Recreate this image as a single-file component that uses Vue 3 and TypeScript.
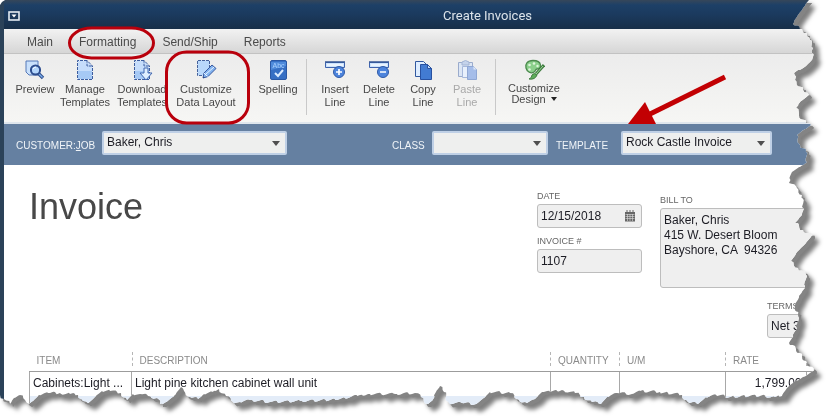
<script setup lang="ts">
import { ref } from 'vue'

type Point = [number, number]

interface Tool {
  icon: string
  lines: string[]
  size: string
  disabled?: boolean
  menu?: boolean
}

const tabs = ['Main', 'Formatting', 'Send/Ship', 'Reports']

const groups: Tool[][] = [
  [
    { icon: 'preview', lines: ['Preview'], size: 'medium' },
    { icon: 'manage', lines: ['Manage', 'Templates'], size: 'medium' },
    { icon: 'download', lines: ['Download', 'Templates'], size: 'wide' },
    { icon: 'layout', lines: ['Customize', 'Data Layout'], size: 'wide' },
    { icon: 'spelling', lines: ['Spelling'], size: 'last' }
  ],
  [
    { icon: 'insert', lines: ['Insert', 'Line'], size: 'narrow' },
    { icon: 'delete', lines: ['Delete', 'Line'], size: 'narrow' },
    { icon: 'copy', lines: ['Copy', 'Line'], size: 'narrow' },
    { icon: 'paste', lines: ['Paste', 'Line'], size: 'narrow', disabled: true }
  ],
  [{ icon: 'design', lines: ['Customize', 'Design'], size: 'wide', menu: true }]
]

const customer = ref('Baker, Chris')
const classification = ref('')
const template = ref('Rock Castle Invoice')
const date = ref('12/15/2018')
const invoiceNumber = ref('1107')
const billTo = ref('Baker, Chris\n415 W. Desert Bloom\nBayshore, CA  94326')
const terms = ref('Net 30')

// Outline of the torn paper: down the right side, then back along the bottom.
const rightEdge: Point[] = [
  [809, 0], [803, 8], [798, 15], [793, 24], [800, 29], [807, 33], [810, 40], [813, 48],
  [812, 60], [806, 66], [794, 73], [795, 80], [803, 90], [809, 95], [801, 101], [796, 108],
  [799, 115], [806, 123], [811, 125], [805, 129], [797, 135], [800, 145], [806, 152],
  [807, 162], [800, 167], [792, 172], [789, 183], [797, 188], [802, 195], [803, 208],
  [802, 215], [795, 223], [803, 230], [812, 235], [806, 243], [797, 252], [791, 261],
  [798, 268], [806, 275], [805, 288], [799, 296], [795, 305], [798, 315], [797, 328],
  [789, 343], [800, 353], [807, 363], [814, 371], [803, 377], [793, 383], [787, 388],
  [782, 396]
]
const bottomEdge: Point[] = [
  [775, 397], [760, 396], [745, 396], [730, 397], [716, 395], [706, 397], [698, 404],
  [688, 402], [682, 395], [668, 393], [660, 392], [640, 391], [632, 394], [617, 393],
  [607, 397], [601, 404], [592, 402], [584, 397], [575, 393], [562, 390], [550, 392],
  [542, 392], [535, 399], [527, 403], [517, 399], [510, 393], [490, 392], [484, 398],
  [476, 404], [462, 403], [449, 403], [444, 392], [440, 386], [436, 392], [432, 401],
  [428, 404], [421, 397], [415, 393], [395, 394], [370, 394], [360, 395], [345, 398],
  [330, 400], [300, 401], [270, 402], [250, 400], [240, 402], [233, 402], [226, 396],
  [219, 389], [212, 392], [204, 394], [198, 399], [190, 397], [184, 391], [181, 387],
  [176, 394], [173, 397], [166, 402], [160, 404], [157, 398], [148, 396], [140, 394],
  [133, 394], [127, 400], [121, 393], [110, 391], [102, 391], [97, 395], [93, 399],
  [88, 403], [83, 401], [78, 395], [70, 394], [60, 393], [48, 393], [39, 395], [33, 401],
  [29, 404], [25, 400], [20, 395], [14, 398], [10, 404], [4, 399], [0, 395]
]

function tear(points: Point[]): Point[] {
  const out: Point[] = []
  points.forEach((p, i) => {
    out.push(p)
    const next = points[i + 1]
    if (!next) return
    const steps = Math.floor(Math.hypot(next[0] - p[0], next[1] - p[1]) / 2)
    for (let s = 1; s < steps; s++) {
      const t = s / steps
      const wobble = Math.sin((i * 7 + s * 5) * 2.3) * 1.3
      out.push([p[0] + (next[0] - p[0]) * t + wobble, p[1] + (next[1] - p[1]) * t - wobble])
    }
  })
  return out
}

const corner: Point[] = [[0, 5], [2, 2], [5, 0]]
const outline = [...corner, ...tear([...rightEdge, ...bottomEdge])]
const tornClip =
  'polygon(' +
  outline
    .map(([x, y]) => `${((x / 826) * 100).toFixed(2)}% ${((y / 416) * 100).toFixed(2)}%`)
    .join(', ') +
  ')'
</script>

<template>
  <div class="page">
    <div class="shadow">
      <div class="sheet" :style="{ clipPath: tornClip }">
        <header class="titlebar">
          <button class="window-menu" type="button" aria-label="Window menu">
            <svg width="12" height="10" viewBox="0 0 12 10">
              <rect x="1" y="1" width="10" height="8" fill="none" stroke="#e4ebf2" stroke-width="1.6" />
              <path d="M3.5 3.5h5L6 6.5z" fill="#fff" />
            </svg>
          </button>
          <h1>Create Invoices</h1>
        </header>

        <nav class="tabs">
          <a v-for="tab in tabs" :key="tab" href="#">{{ tab }}</a>
        </nav>

        <div class="toolbar">
          <div v-for="(group, g) in groups" :key="g" class="group">
            <button
              v-for="tool in group"
              :key="tool.icon"
              type="button"
              class="tool"
              :class="[tool.size, { compact: tool.menu }]"
              :disabled="tool.disabled"
            >
              <svg class="icon" width="22" height="22" viewBox="0 0 22 22" aria-hidden="true">
                <g v-if="tool.icon === 'preview'">
                  <path d="M2 2h12v14H5l-3-3z" fill="#c9e0fb" stroke="#5578b8" />
                  <path d="M14 14l5 5" stroke="#2f4f8c" stroke-width="3.4" />
                  <path d="M14.5 14.5l4 4" stroke="#7fb0ee" stroke-width="1.2" />
                  <circle cx="11.5" cy="11" r="4.6" fill="#b4d6fb" stroke="#2d4d8e" stroke-width="2" />
                  <path d="M9 10q1-2 3-2" fill="none" stroke="#fff" />
                </g>
                <g v-else-if="tool.icon === 'manage' || tool.icon === 'download'">
                  <path d="M4 2h9l5 5v13H4z" fill="#c6ddfb" />
                  <path d="M4 12h14v8H4z" fill="#a6c9f5" />
                  <path d="M13 1.5H3.5v19h15V7L13 1.5V7h5" fill="none" stroke="#3c5d9f" stroke-dasharray="3 1" />
                  <path v-if="tool.icon === 'download'" d="M13 9h4v5h4l-6 7-6-7h4z" fill="#e0efff" stroke="#4268b0" />
                </g>
                <g v-else-if="tool.icon === 'layout'">
                  <path d="M2.5 1.5h12v15l-3 2-2-2h-7z" fill="#b9d8fb" />
                  <path d="M14.5 9V1.5h-12v15h6" fill="none" stroke="#46629b" stroke-dasharray="3 1" />
                  <path d="M8 19l1-5 8-8 4 3.5-8 8z" fill="#83b4f0" stroke="#38599f" />
                  <path d="M9 14l3.5 3.5M11 15l8-7" stroke="#eaf4ff" />
                  <path d="M8 19l1.5-.5-1-1z" fill="#263f77" />
                </g>
                <g v-else-if="tool.icon === 'spelling'">
                  <rect x="3.5" y="1.5" width="16" height="19" rx="1.5" fill="#366fc4" stroke="#2a58a5" />
                  <path d="M4 11V3h15v4z" fill="#4f8bdb" />
                  <text x="11.5" y="8.5" text-anchor="middle" font-size="7" fill="#a9d1ff">Abc</text>
                  <path d="M8 14l3 3 5-6" fill="none" stroke="#dcecff" stroke-width="2" />
                </g>
                <g v-else-if="tool.icon === 'insert' || tool.icon === 'delete'">
                  <path d="M1.5 3.5h19v5h-19z" fill="#cbe2fc" stroke="#3e63ae" />
                  <path d="M1 3h20" stroke="#355694" stroke-width="1.5" />
                  <path d="M3 6h16" stroke="#f5faff" stroke-width="1.5" />
                  <circle cx="15" cy="13" r="5.5" fill="#4d84dc" stroke="#2f5aa8" />
                  <path d="M12 13h6" stroke="#fff" stroke-width="1.7" />
                  <path v-if="tool.icon === 'insert'" d="M15 10v6" stroke="#fff" stroke-width="1.7" />
                </g>
                <g v-else-if="tool.icon === 'copy'">
                  <path d="M3.5 2.5h8l3 3v12h-11z" fill="#deedff" stroke="#31589f" />
                  <path d="M8.5 5.5h7l4 4v11h-11z" fill="#427bd2" stroke="#2851a0" />
                  <path d="M15.5 5.5v4h4z" fill="#bfdafb" stroke="#2851a0" />
                </g>
                <g v-else-if="tool.icon === 'paste'">
                  <path d="M2.5 3.5h14v14h-14z" fill="#dce6f5" stroke="#9aabcc" />
                  <path d="M6 3q3.5-3 7 0v3H6z" fill="#c5d3eb" stroke="#a3b4d4" />
                  <path d="M6.5 7.5h7v11h-7z" fill="#e8f0fc" stroke="#a6b8db" />
                  <path d="M11.5 7.5h6l3 3v10h-9z" fill="#a5bde9" stroke="#8fa7d4" />
                  <path d="M17.5 7.5v3h3z" fill="#dfe9f8" />
                </g>
                <g v-else>
                  <path d="M10 1.5c-6 0-8 4-7 7.5 1 4 5 6 8 4 2-1 1-3 3-3s4-1 3.5-4c-.5-3-4-4.5-7.5-4.5z" fill="#8bcf8b" stroke="#4c8a4e" stroke-width="1.3" />
                  <circle cx="6.5" cy="6" r="1.3" fill="#dff5dc" />
                  <circle cx="11" cy="4.5" r="1.3" fill="#dff5dc" />
                  <circle cx="6.5" cy="10.5" r="1.3" fill="#dff5dc" />
                  <circle cx="14.5" cy="7" r="1.2" fill="#dff5dc" />
                  <path d="M6 20q3-1 3-4 2-3 5 0-2 5-8 4z" fill="#5fae5b" stroke="#3f7d40" />
                  <path d="M13 15l8-9" stroke="#3f7d40" stroke-width="3" />
                  <path d="M13 15l7-8" stroke="#9fd79a" />
                </g>
              </svg>
              <span v-for="line in tool.lines" :key="line" class="line">
                {{ line }}<i v-if="tool.menu && line === 'Design'" class="caret"></i>
              </span>
            </button>
          </div>
        </div>

        <div class="jobbar">
          <div class="picker customer">
            <label for="customer">CUSTOMER:<u>J</u>OB</label>
            <span class="select">
              <select id="customer" v-model="customer">
                <option>Baker, Chris</option>
              </select>
            </span>
          </div>
          <div class="picker class">
            <label for="class">CLASS</label>
            <span class="select">
              <select id="class" v-model="classification">
                <option value=""></option>
              </select>
            </span>
          </div>
          <div class="picker template">
            <label for="template">TEMPLATE</label>
            <span class="select">
              <select id="template" v-model="template">
                <option>Rock Castle Invoice</option>
              </select>
            </span>
          </div>
        </div>

        <section class="form">
          <h2>Invoice</h2>
          <div class="numbers">
            <label for="date">DATE</label>
            <div class="box">
              <input id="date" v-model="date" type="text" />
              <svg width="12" height="12" viewBox="0 0 12 12" aria-hidden="true">
                <path d="M1 2h10v9.5H1z" fill="#666" />
                <path d="M3 0v3M6 0v3M9 0v3" stroke="#666" />
                <path d="M1.5 4.5h9M1.5 6.5h9M1.5 8.5h9M3.5 4v7M6 4v7M8.5 4v7" stroke="#ddd" stroke-width=".6" />
              </svg>
            </div>
            <label for="number">INVOICE #</label>
            <div class="box">
              <input id="number" v-model="invoiceNumber" type="text" />
            </div>
          </div>
          <div class="billing">
            <label for="billto">BILL TO</label>
            <textarea id="billto" v-model="billTo"></textarea>
            <div class="terms">
              <label for="terms">TERMS</label>
              <div class="box">
                <input id="terms" v-model="terms" type="text" />
              </div>
            </div>
          </div>
        </section>

        <table class="items">
          <colgroup>
            <col class="c-item" />
            <col />
            <col class="c-qty" />
            <col class="c-um" />
            <col class="c-rate" />
            <col class="c-end" />
          </colgroup>
          <thead>
            <tr>
              <th><span>ITEM</span></th>
              <th><span>DESCRIPTION</span></th>
              <th><span>QUANTITY</span></th>
              <th><span>U/M</span></th>
              <th><span>RATE</span></th>
              <th><span></span></th>
            </tr>
          </thead>
          <tbody>
            <tr>
              <td>Cabinets:Light ...</td>
              <td>Light pine kitchen cabinet wall unit</td>
              <td></td>
              <td></td>
              <td class="amount">1,799.00</td>
              <td></td>
            </tr>
            <tr>
              <td></td>
              <td></td>
              <td></td>
              <td></td>
              <td></td>
              <td></td>
            </tr>
          </tbody>
        </table>
      </div>
    </div>

    <svg class="marks" width="826" height="416" viewBox="0 0 826 416" aria-hidden="true">
      <g fill="none" stroke="#b9000c" stroke-width="3">
        <rect x="69.500" y="28" width="84" height="30" rx="22" ry="15" />
        <rect x="166.500" y="52" width="82" height="71" rx="20" />
      </g>
      <path d="M725 77L648 115" stroke="#c20003" stroke-width="5" />
      <path d="M628 124L645 102L656 124z" fill="#c20003" />
    </svg>
  </div>
</template>

<style>
body {
  margin: 0;
  background: #fff;
}
</style>

<style scoped>
.page {
  position: relative;
  overflow: hidden;
  min-height: 100vh;
  font-family: "Liberation Sans", Arial, sans-serif;
  font-size: 12px;
  color: #1c1c24;
}
.page * {
  box-sizing: border-box;
}
.shadow {
  filter: drop-shadow(3px 3px 0 #848484) drop-shadow(4px 4px 2px rgba(0, 0, 0, 0.5));
}
.sheet {
  min-height: 100vh;
  overflow: hidden;
  background: #fff;
  border-left: 4px solid #2b4259;
}
button,
input,
select,
textarea {
  font: inherit;
  color: inherit;
  margin: 0;
}
.titlebar {
  display: flex;
  align-items: center;
  height: 29px;
  padding: 2px 0 0 4px;
  background: linear-gradient(#36475a 0, #1d4067 5px, #1b3a5e 50%, #182f48 100%);
}
.window-menu {
  display: flex;
  width: 12px;
  padding: 0;
  border: 0;
  background: none;
}
.titlebar h1 {
  margin: 0 0 0 423px;
  font: 13px/18px Roboto, "Liberation Sans", sans-serif;
  color: #dbe3ea;
}
.tabs {
  display: flex;
  gap: 26px;
  height: 25px;
  padding-left: 23px;
  line-height: 27px;
  background: linear-gradient(#f2f2f2, #d6d6d6);
  border-bottom: 1px solid #c2c2c2;
}
.tabs a {
  color: #4a4a4a;
  text-decoration: none;
}
.toolbar {
  display: flex;
  height: 70px;
  padding: 5px 0 7px 6px;
  background: linear-gradient(#ececec, #f6f6f4);
  border-bottom: 2px solid #dfe6ed;
}
.group {
  display: flex;
  padding-right: 6px;
}
.group + .group {
  padding-left: 6px;
  border-left: 1px solid #c9c9c9;
}
.tool {
  display: flex;
  flex-direction: column;
  align-items: center;
  padding: 0;
  border: 0;
  background: none;
  font-size: 11px;
  line-height: 13px;
  color: #474747;
  white-space: nowrap;
}
.tool .icon {
  flex: none;
  margin-bottom: 2px;
}
.medium {
  width: 50px;
}
.wide {
  width: 64px;
}
.narrow {
  width: 44px;
}
.last {
  width: 62px;
  padding-left: 18px;
}
.compact {
  line-height: 11px;
}
.tool:disabled {
  color: #a9a9a9;
}
.caret {
  display: inline-block;
  margin: 0 0 2px 5px;
  border: 3px solid transparent;
  border-top: 4px solid #222;
  border-bottom: 0;
}
.jobbar {
  display: flex;
  height: 41px;
  padding: 7px 0 0 12px;
  background: #6580a1;
}
.picker {
  display: flex;
}
.picker label {
  flex: none;
  padding-top: 9px;
  font-size: 10px;
  line-height: 12px;
  color: #f0f4f8;
}
.customer label {
  width: 86px;
}
.customer .select {
  width: 185px;
}
.class {
  margin-left: 105px;
}
.class label {
  width: 40px;
}
.class .select {
  width: 116px;
}
.template {
  margin-left: 8px;
}
.template label {
  width: 65px;
}
.template .select {
  width: 151px;
}
.select {
  position: relative;
  height: 24px;
}
.select::after {
  content: "";
  position: absolute;
  top: 10px;
  right: 7px;
  border: 4px solid transparent;
  border-top: 5px solid #4f4f4f;
  border-bottom: 0;
  pointer-events: none;
}
.select select {
  appearance: none;
  width: 100%;
  height: 24px;
  padding: 0 20px 2px 3px;
  border: 2px solid #bfd0e6;
  border-radius: 2px;
  background: #eeefee;
}
.form {
  display: flex;
  height: 187px;
  padding-left: 25px;
}
.form h2 {
  flex: none;
  width: 508px;
  margin: 0;
  padding-top: 22px;
  font-size: 36px;
  font-weight: 400;
  line-height: 40px;
  color: #484848;
}
.numbers {
  flex: none;
  width: 123px;
  padding: 24px 18px 0 0;
}
.form label {
  display: block;
  height: 15px;
  font-size: 9px;
  line-height: 15px;
  color: #666;
}
.box {
  display: flex;
  align-items: center;
  height: 24px;
  padding: 0 5px 0 3px;
  border: 1px solid #bdbdbd;
  border-radius: 3px;
  background: #efefef;
}
.box + label {
  margin-top: 6px;
}
.box input {
  flex: 1;
  width: 0;
  min-width: 0;
  padding: 0;
  border: 0;
  background: none;
}
.billing {
  flex: 1 0 160px;
  padding-top: 28px;
}
.billing textarea {
  display: block;
  width: 100%;
  height: 80px;
  padding: 4px 3px;
  border: 1px solid #bdbdbd;
  border-radius: 3px;
  background: #efefef;
  line-height: 15px;
  resize: none;
  overflow: hidden;
}
.terms {
  padding: 11px 0 0 107px;
}
.items {
  width: calc(100% - 25px);
  margin-left: 25px;
  table-layout: fixed;
  border-collapse: collapse;
}
.c-item {
  width: 102px;
}
.c-qty {
  width: 69px;
}
.c-um {
  width: 106px;
}
.c-rate {
  width: 81px;
}
.c-end {
  width: 20px;
}
.items th {
  height: 19px;
  padding: 0 0 5px;
  text-align: left;
  font-size: 10px;
  font-weight: 400;
  line-height: 14px;
  color: #8a8a8a;
  border-bottom: 1px solid #9c9c9c;
}
.items th span {
  display: block;
  height: 14px;
  padding: 2px 0 0 7px;
  line-height: 14px;
}
.items th + th span {
  border-left: 1px dashed #b5b5b5;
}
.items td {
  height: 24px;
  padding: 0 4px 2px 3px;
  border-left: 1px solid #a8a8a8;
  white-space: nowrap;
}
.items .amount {
  text-align: right;
}
.items tbody tr:nth-child(even) {
  background: #e3ecf8;
}
.items tbody tr:nth-child(even) td {
  height: 20px;
}
.marks {
  position: absolute;
  top: 0;
  left: 0;
}
</style>
